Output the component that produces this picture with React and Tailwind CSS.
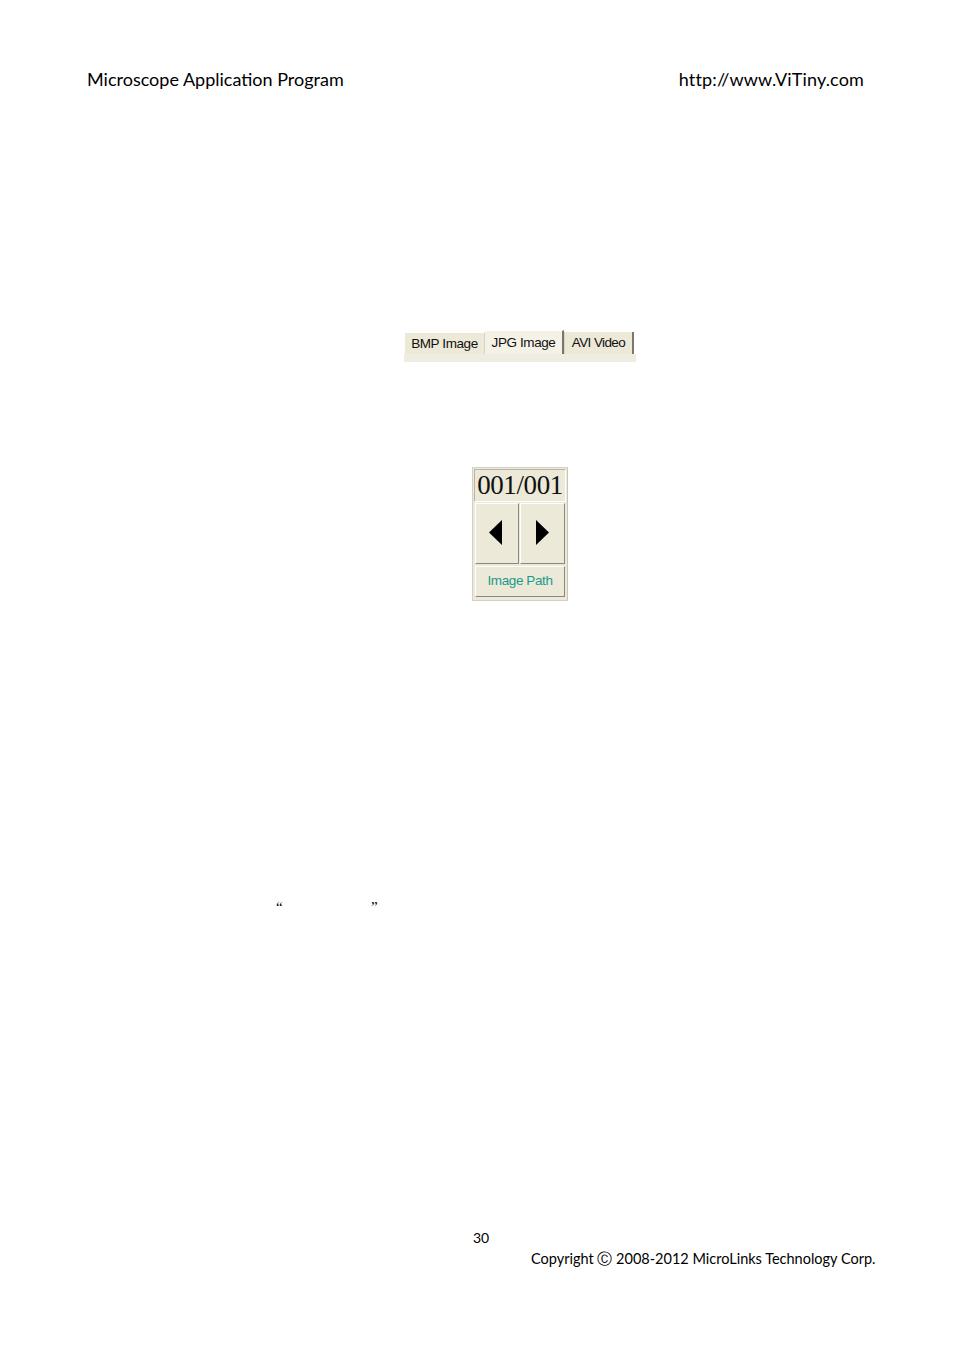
export default function App() {
  const sans = { fontFamily: '"Lato", "Open Sans", sans-serif' };
  return (
    <div className="w-[954px] h-[1350px] bg-white relative text-black" style={sans}>
      <div className="pt-[68px] pl-[87px] pr-[90px] flex justify-between text-[18px] leading-[22px]">
        <span>Microscope Application Program</span>
        <span className="tracking-[0.15px]">http://www.ViTiny.com</span>
      </div>

      {/* Tab strip */}
      <div className="mt-[240px] ml-[404px] w-[232px] flex flex-col" style={{ fontFamily: '"Liberation Sans", Arial, sans-serif' }}>
        <div className="h-[24px] flex items-end bg-white">
          <div className="w-[81px] h-[22px] bg-[#ece9d8] border-t border-l border-white border-r border-r-[#d8d4c4] flex items-center justify-center text-[13.5px] tracking-[-0.4px] text-[#111] pt-[1px]">BMP Image</div>
          <div className="w-[79px] h-[24px] bg-[#f4f2e6] border-t border-white border-r-2 border-r-[#7a7868] flex items-start justify-center text-[13.5px] tracking-[-0.4px] text-[#111] pt-[2px]">JPG Image</div>
          <div className="w-[70px] h-[22px] bg-[#ece9d8] border-l border-[#d8d4c4] border-r-2 border-r-[#7a7868] flex items-center justify-center text-[13.5px] tracking-[-0.6px] text-[#111] pt-[1px]">AVI Video</div>
        </div>
        <div className="h-[8px] bg-[#efede1]"></div>
      </div>

      {/* Navigator widget */}
      <div className="mt-[105px] ml-[472px] w-[96px] h-[134px] bg-[#ece9d8] border border-[#d4d0c4] border-r-[#c9c5b8] p-[1px] flex flex-col">
        <div className="h-[33px] border border-[#b8b4a6] border-b-white border-r-white bg-[#ece9d8] flex items-center justify-center text-[27px] leading-none text-[#111] tracking-[-0.4px]" style={{ fontFamily: '"Liberation Serif", "Times New Roman", serif' }}>001/001</div>
        <div className="mt-[1px] flex gap-[1px] px-[1px]">
          <div className="w-[44px] h-[61px] bg-[#ece9d8] border border-white border-r-[#8a887c] border-b-[#8a887c] flex items-center justify-center pr-[4px] pb-[2px]">
            <svg width="13" height="25" viewBox="0 0 13 25"><polygon points="13,0 13,25 0,12.5" fill="#000" /></svg>
          </div>
          <div className="w-[45px] h-[61px] bg-[#ece9d8] border border-white border-r-[#8a887c] border-b-[#8a887c] flex items-center justify-center pb-[2px]">
            <svg width="13" height="25" viewBox="0 0 13 25"><polygon points="0,0 0,25 13,12.5" fill="#000" /></svg>
          </div>
        </div>
        <div className="mt-[2px] mx-[1px] h-[31px] bg-[#ece9d8] border border-white border-r-[#8a887c] border-b-[#8a887c] flex items-center justify-center text-[13.5px] text-[#1a9a8e] tracking-[-0.4px]" style={{ fontFamily: '"Liberation Sans", Arial, sans-serif' }}>Image Path</div>
      </div>

      {/* Quotes */}
      <div className="mt-[298px] ml-[276px] flex text-[15px] leading-[16px] text-black" style={{ fontFamily: '"Liberation Serif", serif' }}>
        <span className="w-[95px]">“</span>
        <span>”</span>
      </div>

      {/* Footer */}
      <div className="mt-[314px] ml-[473px] text-[14px] leading-[18px]">30</div>
      <div className="mt-[3px] ml-[531px] text-[14.5px] leading-[18px] whitespace-nowrap">Copyright Ⓒ 2008-2012 MicroLinks Technology Corp.</div>
    </div>
  );
}
